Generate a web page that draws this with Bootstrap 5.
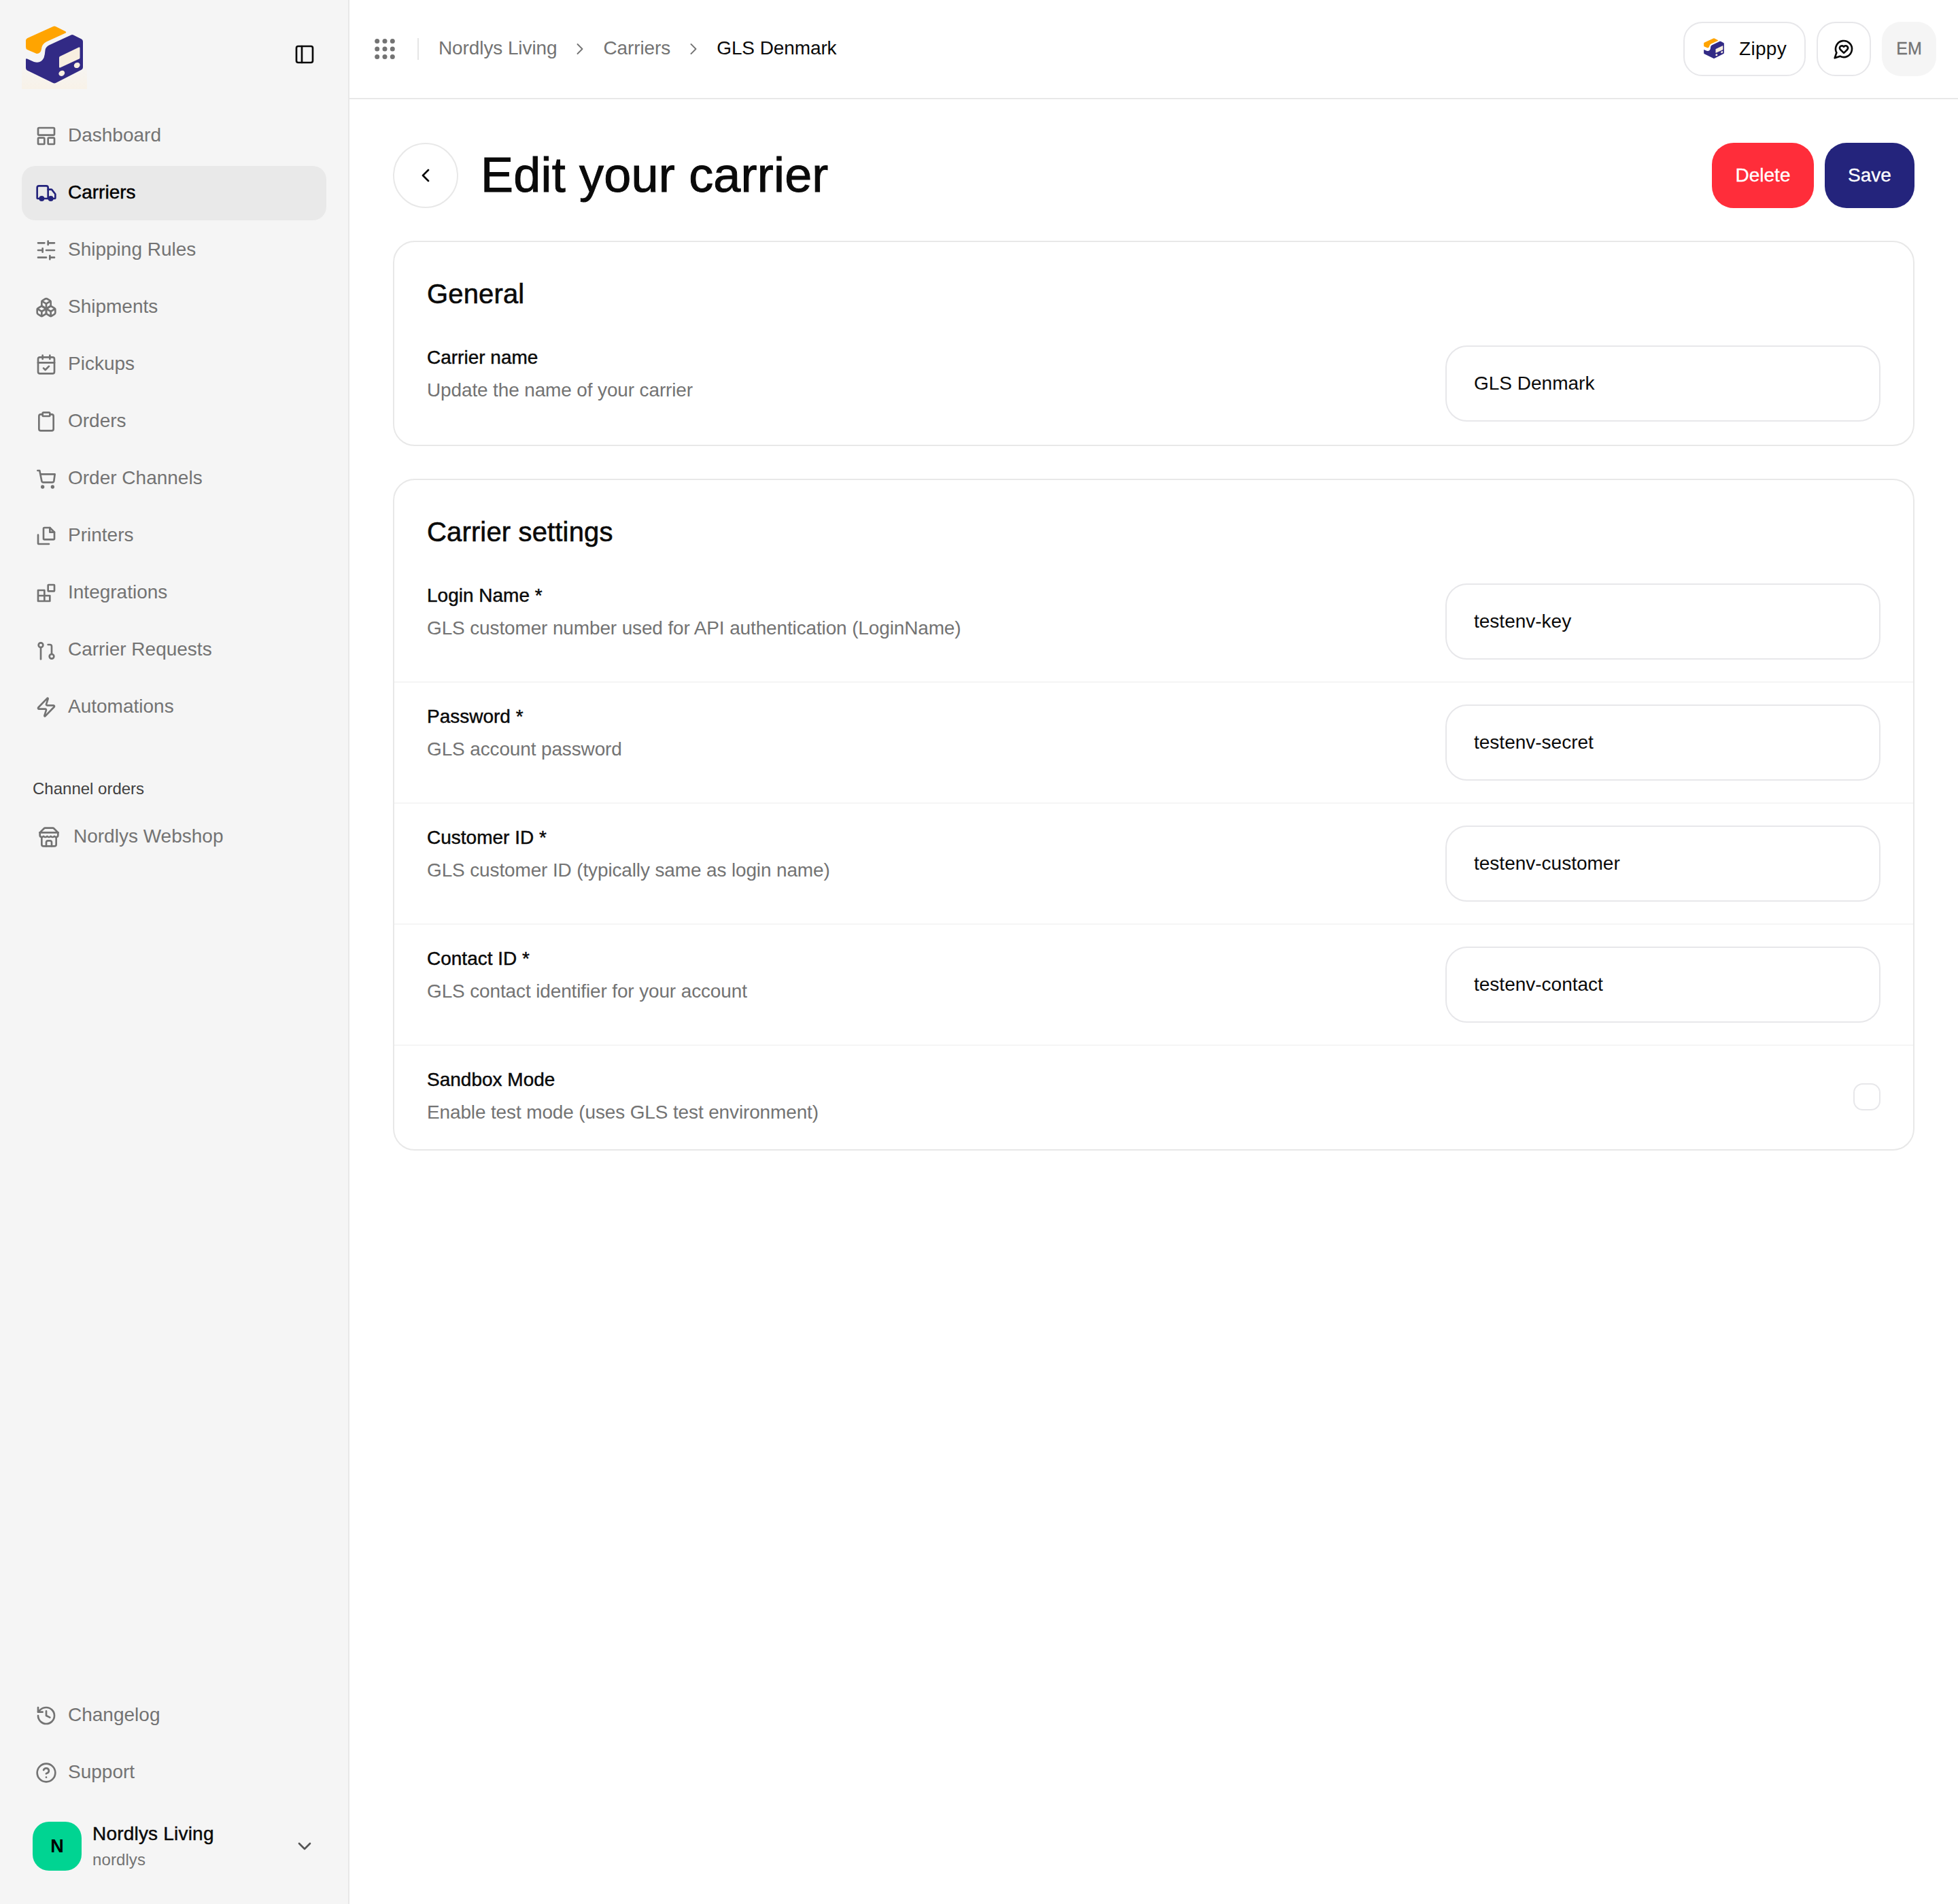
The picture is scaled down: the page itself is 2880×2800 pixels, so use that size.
<!DOCTYPE html>
<html lang="en">
<head>
<meta charset="UTF-8">
<title>Edit your carrier</title>
<link href="https://cdn.jsdelivr.net/npm/bootstrap@5.3.0/dist/css/bootstrap.min.css" rel="stylesheet">
<style>
body { font-family: "Liberation Sans", Arial, sans-serif; font-size: 28px; color: #0a0a0a; background: #fff; }
.ic { width: 32px; height: 32px; flex: none; fill: none; stroke: currentColor; stroke-width: 2; stroke-linecap: round; stroke-linejoin: round; }
.med { -webkit-text-stroke: 0.45px currentColor; }

/* sidebar */
.side { width: 514px; flex: none; background: #f5f5f5; border-right: 2px solid #e8e8e8; padding: 0 32px 49px; }
.brand { height: 160px; }
.brand-logo { width: 96px; height: 96px; margin-top: 5px; background: linear-gradient(#f5f5f5 55%, #f8f2e8); }
.brand-toggle { margin-right: 16px; color: #0a0a0a; }
.side .nav { gap: 4px; }
.side-link { height: 80px; padding: 0 20px; gap: 16px; border-radius: 20px; color: #737373; line-height: 36px; }
.side-link span { margin-top: -3px; }
.side-link.on { background: #e9e9e9; color: #000; }
.side-link.on .ic { color: #24247c; }
.side-label { margin: 60px 0 11px; padding-left: 16px; font-size: 24px; line-height: 40px; color: #404040; }
.side-link.shop { padding-left: 24px; gap: 20px; }
.acct { margin-top: 32px; padding: 0 16px; gap: 16px; }
.acct-av { width: 72px; height: 72px; border-radius: 24px; background: #00d492; color: #000; font-weight: 700; font-size: 27px; }
.acct-name { line-height: 36px; color: #0a0a0a; letter-spacing: 0.2px; }
.acct-sub { font-size: 24px; line-height: 32px; color: #737373; margin-top: 4px; letter-spacing: 0.1px; }
.acct .ic { color: #555; }

/* top bar */
.top { height: 146px; flex: none; border-bottom: 2px solid #e8e8e8; padding: 0 32px 0 34px; }
.top-dots { width: 36px; height: 36px; fill: #737373; }
.top-sep { width: 2px; height: 32px; background: #e5e5e5; margin: 0 29px 0 30px; }
.crumbs { margin: -2px 0 0; gap: 29px; color: #737373; letter-spacing: -0.1px; }
.crumbs .breadcrumb-item { padding: 0; display: flex; align-items: center; gap: 29px; color: #737373; }
.crumbs .breadcrumb-item::before { display: none; }
.crumbs .breadcrumb-item.active { color: #0a0a0a; }
.crumbs a { color: #737373; text-decoration: none; }
.crumbs .ic { width: 28px; height: 28px; stroke-width: 1.6; margin: 2px -9px 0; }
.top-btn { height: 80px; border: 2px solid #e7e7ea; border-radius: 28px; background: #fff; color: #0a0a0a; font-size: 28px; padding: 0; }
.top-zip { width: 180px; gap: 20px; letter-spacing: 0.3px; }
.top-zip svg { width: 34px; height: 34px; margin-left: 0; }
.top-chat { width: 80px; }
.top-em { width: 80px; height: 80px; border-radius: 28px; background: #f5f5f5; color: #737373; font-size: 25px; -webkit-text-stroke: 0.3px currentColor; }

/* page */
.page { padding: 64px 64px 0 64px; }
.back { width: 96px; height: 96px; border: 2px solid #e8e8e8; border-radius: 50%; background: #fff; color: #0a0a0a; padding: 0; }
.title { font-size: 72px; line-height: 96px; margin: -2px 0 0 33px; font-weight: 400; letter-spacing: 0.2px; -webkit-text-stroke: 1px currentColor; }
.act { height: 96px; border: 0; border-radius: 32px; color: #fff; font-size: 28px; padding: 0; -webkit-text-stroke: 0.3px currentColor; }
.act:hover { color: #fff; }
.act-del { width: 150px; background: #ff2d3a; }
.act-save { width: 132px; background: #24247c; }
.head-row { margin-bottom: 48px; }
.panel { border: 2px solid #e8e8e8; border-radius: 32px; margin-bottom: 48px; --bs-card-bg: #fff; overflow: hidden; }
.panel-title { padding: 52px 48px 20px; font-size: 40px; line-height: 48px; font-weight: 400; margin: 0; -webkit-text-stroke: 0.6px currentColor; letter-spacing: 0.15px; }
.panel > .list-group { border: 0; }
.panel .list-group-item { padding: 32px 48px; border-color: #f5f5f5; border-width: 0 0 2px; background: transparent; color: inherit; }
.panel .list-group-item:last-child { border-bottom: 0; padding-bottom: 34px; }
.fld-name { line-height: 40px; margin-top: -2px; }
.fld-help { line-height: 40px; color: #737373; margin-top: 8px; letter-spacing: -0.14px; }
.fld-input { width: 640px; height: 112px; flex: none; border: 2px solid #e7e7ea; border-radius: 32px; padding: 0 40px; font-size: 28px; color: #0a0a0a; }
.panel .fld-check { width: 40px; height: 40px; margin: 0; border: 2px solid #e7e7ea; border-radius: 14px; flex: none; }
</style>
</head>
<body>
<svg width="0" height="0" class="position-absolute">
  <symbol id="logo" viewBox="0 0 96 96">
    <path fill="#ffa400" d="M45.5 4.2 Q48 3 50.5 4.2 L64 11 Q66.5 12.5 64 13.8 L36 26.5 Q29.5 30 29 37 Q28 44 22 44 L8 38 Q6 37 6 34 V24.5 Q6 22 8.5 21 Z"/>
    <path fill="#322a85" d="M72.5 16.5 Q74 15.6 76 16.5 L88 22.5 Q90 23.5 90 26 V64 Q90 66.5 88 67.5 L50.5 86.8 Q48 88 45.5 86.8 L8 68.5 Q6 67.5 6 65 V52.5 Q6 50.5 8 51.5 L18 56 Q28 59 32.5 50 Q34 46 34.5 39 Q35 34 40 31.5 Z"/>
    <path fill="#f8efe0" d="M55 49.5 Q55 48.5 56 48 L84 34.6 Q85.5 34 85.5 35.5 V50 Q85.5 51 84.5 51.5 L56.5 64.4 Q55 65 55 63.5 Z"/>
    <ellipse fill="#f8efe0" cx="58.8" cy="72.8" rx="4.6" ry="3.9" transform="rotate(-30 58.8 72.8)"/>
    <ellipse fill="#f8efe0" cx="81.2" cy="61" rx="4.6" ry="3.9" transform="rotate(-30 81.2 61)"/>
  </symbol>
</svg>

<div class="d-flex vh-100">
  <aside class="side d-flex flex-column">
    <div class="brand d-flex align-items-center justify-content-between">
      <svg class="brand-logo"><use href="#logo"/></svg>
      <svg class="ic brand-toggle" viewBox="0 0 24 24"><rect x="3" y="3" width="18" height="18" rx="2"/><path d="M9 3v18"/></svg>
    </div>
    <nav class="nav flex-column">
      <a class="nav-link side-link d-flex align-items-center" href="#"><svg class="ic" viewBox="0 0 24 24"><rect x="3" y="3" width="18" height="8" rx="1"/><rect x="3" y="14" width="7" height="7" rx="1"/><rect x="14" y="14" width="7" height="7" rx="1"/></svg><span>Dashboard</span></a>
      <a class="nav-link side-link on d-flex align-items-center" href="#"><svg class="ic" viewBox="0 0 24 24"><path d="M14 18V6a2 2 0 0 0-2-2H4a2 2 0 0 0-2 2v11a1 1 0 0 0 1 1h2"/><path d="M15 18H9"/><path d="M19 18h2a1 1 0 0 0 1-1v-3.65a1 1 0 0 0-.22-.624l-3.48-4.35A1 1 0 0 0 17.52 8H14"/><circle cx="17" cy="18" r="2" fill="currentColor"/><circle cx="7" cy="18" r="2" fill="currentColor"/></svg><span class="med">Carriers</span></a>
      <a class="nav-link side-link d-flex align-items-center" href="#"><svg class="ic" viewBox="0 0 24 24"><path d="M21 4h-7M10 4H3M21 12h-9M8 12H3M21 20h-5M12 20H3M14 2v4M8 10v4M16 18v4"/></svg><span>Shipping Rules</span></a>
      <a class="nav-link side-link d-flex align-items-center" href="#"><svg class="ic" viewBox="0 0 24 24"><path d="M2.97 12.92A2 2 0 0 0 2 14.63v3.24a2 2 0 0 0 .97 1.71l3 1.8a2 2 0 0 0 2.06 0L12 19v-5.5l-5-3-4.03 2.42Z"/><path d="m7 16.5-4.74-2.85"/><path d="m7 16.5 5-3"/><path d="M7 16.5v5.17"/><path d="M12 13.5V19l3.97 2.38a2 2 0 0 0 2.06 0l3-1.8a2 2 0 0 0 .97-1.71v-3.24a2 2 0 0 0-.97-1.71L17 10.5l-5 3Z"/><path d="m17 16.5-5-3"/><path d="m17 16.5 4.74-2.85"/><path d="M17 16.5v5.17"/><path d="M7.97 4.42A2 2 0 0 0 7 6.13v4.37l5 3 5-3V6.13a2 2 0 0 0-.97-1.71l-3-1.8a2 2 0 0 0-2.06 0l-3 1.8Z"/><path d="M12 8 7.26 5.15"/><path d="m12 8 4.74-2.85"/><path d="M12 13.5V8"/></svg><span>Shipments</span></a>
      <a class="nav-link side-link d-flex align-items-center" href="#"><svg class="ic" viewBox="0 0 24 24"><path d="M8 2v4M16 2v4"/><rect x="3" y="4" width="18" height="18" rx="2"/><path d="M3 10h18"/><path d="m9 16 2 2 4-4"/></svg><span>Pickups</span></a>
      <a class="nav-link side-link d-flex align-items-center" href="#"><svg class="ic" viewBox="0 0 24 24"><rect x="8" y="2" width="8" height="4" rx="1"/><path d="M16 4h2a2 2 0 0 1 2 2v14a2 2 0 0 1-2 2H6a2 2 0 0 1-2-2V6a2 2 0 0 1 2-2h2"/></svg><span>Orders</span></a>
      <a class="nav-link side-link d-flex align-items-center" href="#"><svg class="ic" viewBox="0 0 24 24"><circle cx="8" cy="21" r="1" fill="currentColor"/><circle cx="19" cy="21" r="1" fill="currentColor"/><path d="M2.5 3h2.2L7 14.5a2 2 0 0 0 2 1.5h9.5a2 2 0 0 0 2-1.6L21.5 7H5.5"/></svg><span>Order Channels</span></a>
      <a class="nav-link side-link d-flex align-items-center" href="#"><svg class="ic" viewBox="0 0 24 24"><path d="M9 4a1 1 0 0 1 1-1h6l5 5v7a1 1 0 0 1-1 1H10a1 1 0 0 1-1-1z"/><path d="M16 3v5h5"/><path d="M3 11v9a1 1 0 0 0 1 1h11"/></svg><span>Printers</span></a>
      <a class="nav-link side-link d-flex align-items-center" href="#"><svg class="ic" viewBox="0 0 24 24"><path d="M3 9h7v6h6v6H3zM3 15h7M10 15v6"/><rect x="14" y="3" width="7" height="7" rx=".5"/></svg><span>Integrations</span></a>
      <a class="nav-link side-link d-flex align-items-center" href="#"><svg class="ic" viewBox="0 0 24 24"><circle cx="6" cy="6.5" r="2.5"/><path d="M6 9v13"/><circle cx="18" cy="19" r="2.5"/><path d="M14 6h2a2 2 0 0 1 2 2v8.5"/></svg><span>Carrier Requests</span></a>
      <a class="nav-link side-link d-flex align-items-center" href="#"><svg class="ic" viewBox="0 0 24 24"><path d="M4 14a1 1 0 0 1-.78-1.63l9.9-10.2a.5.5 0 0 1 .86.46l-1.92 6.02A1 1 0 0 0 13 10h7a1 1 0 0 1 .78 1.63l-9.9 10.2a.5.5 0 0 1-.86-.46l1.92-6.02A1 1 0 0 0 11 14z"/></svg><span>Automations</span></a>
    </nav>
    <div class="side-label">Channel orders</div>
    <a class="nav-link side-link shop d-flex align-items-center" href="#"><svg class="ic" viewBox="0 0 24 24"><path d="m2 7 4.41-4.41A2 2 0 0 1 7.83 2h8.34a2 2 0 0 1 1.42.59L22 7"/><path d="M4 12v8a2 2 0 0 0 2 2h12a2 2 0 0 0 2-2v-8"/><path d="M15 22v-4a2 2 0 0 0-2-2h-2a2 2 0 0 0-2 2v4"/><path d="M2 7h20"/><path d="M22 7v3a2 2 0 0 1-2 2a2.7 2.7 0 0 1-1.59-.63.7.7 0 0 0-.82 0A2.7 2.7 0 0 1 16 12a2.7 2.7 0 0 1-1.59-.63.7.7 0 0 0-.82 0A2.7 2.7 0 0 1 12 12a2.7 2.7 0 0 1-1.59-.63.7.7 0 0 0-.82 0A2.7 2.7 0 0 1 8 12a2.7 2.7 0 0 1-1.59-.63.7.7 0 0 0-.82 0A2.7 2.7 0 0 1 4 12a2 2 0 0 1-2-2V7"/></svg><span>Nordlys Webshop</span></a>
    <div class="mt-auto">
      <nav class="nav flex-column">
        <a class="nav-link side-link d-flex align-items-center" href="#"><svg class="ic" viewBox="0 0 24 24"><path d="M3 12a9 9 0 1 0 9-9 9.75 9.75 0 0 0-6.74 2.74L3 8"/><path d="M3 3v5h5"/><path d="M12 7v5l4 2"/></svg><span>Changelog</span></a>
        <a class="nav-link side-link d-flex align-items-center" href="#"><svg class="ic" viewBox="0 0 24 24"><circle cx="12" cy="12" r="10"/><path d="M9.09 9a3 3 0 0 1 5.83 1c0 2-3 3-3 3"/><path d="M12 17h.01"/></svg><span>Support</span></a>
      </nav>
      <div class="acct d-flex align-items-center">
        <div class="acct-av d-flex align-items-center justify-content-center flex-shrink-0">N</div>
        <div>
          <div class="acct-name med">Nordlys Living</div>
          <div class="acct-sub">nordlys</div>
        </div>
        <svg class="ic ms-auto" viewBox="0 0 24 24"><path d="m6 9 6 6 6-6"/></svg>
      </div>
    </div>
  </aside>

  <div class="flex-grow-1 d-flex flex-column">
    <header class="top d-flex align-items-center">
      <svg class="top-dots" viewBox="0 0 36 36"><circle cx="6.7" cy="6.5" r="3.5"/><circle cx="18" cy="6.5" r="3.5"/><circle cx="29.3" cy="6.5" r="3.5"/><circle cx="6.7" cy="18" r="3.5"/><circle cx="18" cy="18" r="3.5"/><circle cx="29.3" cy="18" r="3.5"/><circle cx="6.7" cy="29.5" r="3.5"/><circle cx="18" cy="29.5" r="3.5"/><circle cx="29.3" cy="29.5" r="3.5"/></svg>
      <div class="top-sep"></div>
      <ol class="breadcrumb crumbs align-items-center">
        <li class="breadcrumb-item"><a href="#">Nordlys Living</a><svg class="ic" viewBox="0 0 24 24"><path d="m9 18 6-6-6-6"/></svg></li>
        <li class="breadcrumb-item"><a href="#">Carriers</a><svg class="ic" viewBox="0 0 24 24"><path d="m9 18 6-6-6-6"/></svg></li>
        <li class="breadcrumb-item active">GLS Denmark</li>
      </ol>
      <div class="ms-auto d-flex align-items-center gap-3">
        <button class="btn top-btn top-zip d-flex align-items-center justify-content-center"><svg><use href="#logo"/></svg><span>Zippy</span></button>
        <button class="btn top-btn top-chat d-flex align-items-center justify-content-center"><svg class="ic" viewBox="0 0 24 24"><path d="M7.9 20A9 9 0 1 0 4 16.1L2 22Z"/><path d="M15.8 9.2a2.5 2.5 0 0 0-3.5 0l-.3.4-.35-.3a2.42 2.42 0 1 0-3.2 3.6l3.6 3.5 3.6-3.5c1.2-1.2 1.1-2.7.2-3.7"/></svg></button>
        <div class="top-em d-flex align-items-center justify-content-center">EM</div>
      </div>
    </header>

    <main class="page flex-grow-1">
      <div class="head-row d-flex align-items-center">
        <button class="btn back d-flex align-items-center justify-content-center"><svg class="ic" viewBox="0 0 24 24"><path d="m15 18-6-6 6-6"/></svg></button>
        <h1 class="title">Edit your carrier</h1>
        <div class="ms-auto d-flex gap-3">
          <button class="btn act act-del">Delete</button>
          <button class="btn act act-save">Save</button>
        </div>
      </div>

      <section class="card panel">
        <h2 class="panel-title">General</h2>
        <div class="list-group list-group-flush">
          <div class="list-group-item d-flex justify-content-between align-items-start">
            <div><div class="fld-name med">Carrier name</div><div class="fld-help">Update the name of your carrier</div></div>
            <input class="form-control fld-input" type="text" value="GLS Denmark">
          </div>
        </div>
      </section>

      <section class="card panel">
        <h2 class="panel-title">Carrier settings</h2>
        <div class="list-group list-group-flush">
          <div class="list-group-item d-flex justify-content-between align-items-start">
            <div><div class="fld-name med">Login Name *</div><div class="fld-help">GLS customer number used for API authentication (LoginName)</div></div>
            <input class="form-control fld-input" type="text" value="testenv-key">
          </div>
          <div class="list-group-item d-flex justify-content-between align-items-start">
            <div><div class="fld-name med">Password *</div><div class="fld-help">GLS account password</div></div>
            <input class="form-control fld-input" type="text" value="testenv-secret">
          </div>
          <div class="list-group-item d-flex justify-content-between align-items-start">
            <div><div class="fld-name med">Customer ID *</div><div class="fld-help">GLS customer ID (typically same as login name)</div></div>
            <input class="form-control fld-input" type="text" value="testenv-customer">
          </div>
          <div class="list-group-item d-flex justify-content-between align-items-start">
            <div><div class="fld-name med">Contact ID *</div><div class="fld-help">GLS contact identifier for your account</div></div>
            <input class="form-control fld-input" type="text" value="testenv-contact">
          </div>
          <div class="list-group-item d-flex justify-content-between align-items-center">
            <div><div class="fld-name med">Sandbox Mode</div><div class="fld-help">Enable test mode (uses GLS test environment)</div></div>
            <input class="form-check-input fld-check" type="checkbox">
          </div>
        </div>
      </section>
    </main>
  </div>
</div>
<script src="https://cdn.jsdelivr.net/npm/bootstrap@5.3.0/dist/js/bootstrap.bundle.min.js"></script>
</body>
</html>
